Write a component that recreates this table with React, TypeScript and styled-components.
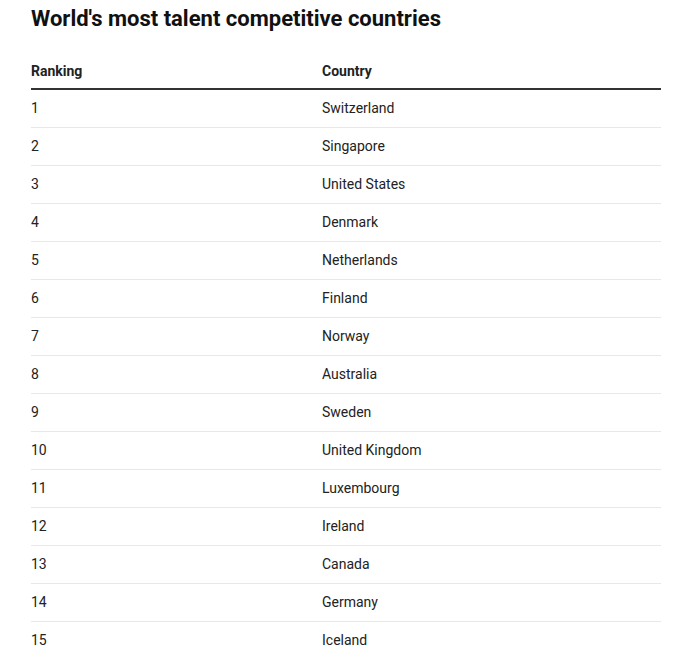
import styled, { createGlobalStyle } from 'styled-components'

const rankings = [
  'Switzerland',
  'Singapore',
  'United States',
  'Denmark',
  'Netherlands',
  'Finland',
  'Norway',
  'Australia',
  'Sweden',
  'United Kingdom',
  'Luxembourg',
  'Ireland',
  'Canada',
  'Germany',
  'Iceland',
]

const GlobalStyle = createGlobalStyle`
  body {
    margin: 0;
    background: #fff;
    font-family: Roboto, "Liberation Sans", sans-serif;
    color: #222;
  }
`

const Page = styled.div`
  padding: 6px 13px 0 31px;
`

const Title = styled.h1`
  margin: 0 0 22px;
  font-size: 22px;
  line-height: 26px;
  font-weight: 700;
  color: #111;
`

const Table = styled.div`
  display: flex;
  flex-direction: column;
`

const Row = styled.div<{ $head?: boolean }>`
  display: grid;
  grid-template-columns: 291px 1fr;
  font-size: 14px;
  line-height: 20px;
  padding: ${props => (props.$head ? '7px 0' : '8px 0 9px')};
  font-weight: ${props => (props.$head ? 700 : 400)};
  border-bottom: ${props => (props.$head ? '2px solid #333' : '1px solid #e8e8e8')};
`

export default function App() {
  return (
    <Page>
      <GlobalStyle />
      <Title>World's most talent competitive countries</Title>
      <Table>
        <Row $head>
          <span>Ranking</span>
          <span>Country</span>
        </Row>
        {rankings.map((country, idx) => (
          <Row key={country}>
            <span>{idx + 1}</span>
            <span>{country}</span>
          </Row>
        ))}
      </Table>
    </Page>
  )
}
